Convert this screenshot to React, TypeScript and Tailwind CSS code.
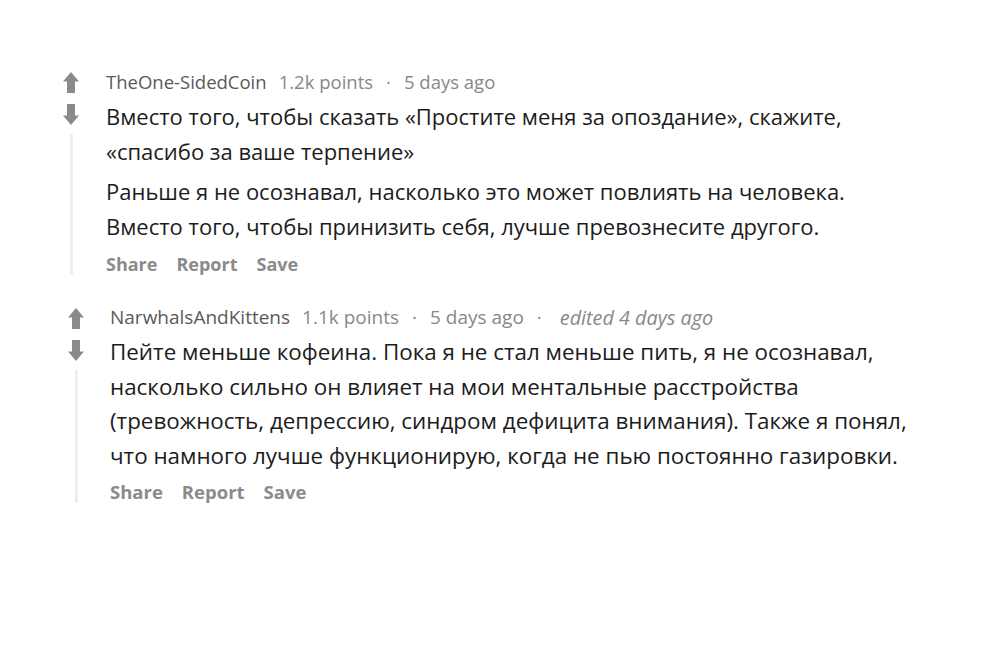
import type { ReactNode } from 'react'

function Arrow({ down = false }: { down?: boolean }) {
  return (
    <svg
      width="16"
      height="21"
      viewBox="0 0 16 21"
      className={down ? 'rotate-180' : ''}
    >
      <path d="M8 0 L16 9.5 H12 V21 H4 V9.5 H0 Z" fill="#8a8a8a" />
    </svg>
  )
}

interface CommentProps {
  author: string
  points: string
  age: string
  edited?: string
  children: ReactNode
  indent: string
  metaClass: string
  bodyClass: string
  actionsClass: string
}

function Comment({ author, points, age, edited, children, indent, metaClass, bodyClass, actionsClass }: CommentProps) {
  return (
    <div className="flex">
      {/* vote column */}
      <div className="flex w-[36px] flex-col items-center">
        <div className="mt-[8px]">
          <Arrow />
        </div>
        <div className="mt-[11px]">
          <Arrow down />
        </div>
        <div className="mt-[9px] w-[3px] flex-1 bg-[#edeef0]" />
      </div>

      <div className={'flex flex-col ' + indent}>
        <div className={metaClass}>
          <span className="text-[#5a5a5a]">{author}</span>
          <span className="ml-[12px]">{points}</span>
          <span className="mx-[13px]">·</span>
          <span>{age}</span>
          {edited && (
            <>
              <span className="mx-[13px]">·</span>
              <span className="ml-[5px] text-[19.8px] italic">{edited}</span>
            </>
          )}
        </div>
        <div className={bodyClass}>{children}</div>
        <div className={actionsClass}>
          <span>Share</span>
          <span>Report</span>
          <span>Save</span>
        </div>
      </div>
    </div>
  )
}

export default function App() {
  return (
    <div className="min-h-screen bg-white pt-[64px] font-['Open_Sans','Noto_Sans',sans-serif]">
      <div className="ml-[53px]">
        <Comment
          author="TheOne-SidedCoin"
          points="1.2k points"
          age="5 days ago"
          indent="ml-[17px]"
          metaClass="flex h-[35px] items-center text-[18.5px] text-[#888]"
          bodyClass="text-[22px] leading-[35px] text-[#1c1c1c]"
          actionsClass="mt-[9px] flex h-[22px] items-center gap-[19px] text-[18px] font-bold text-[#8b8b8b]"
        >
          <p>
            Вместо того, чтобы сказать «Простите меня за опоздание», скажите,
            <br />
            «спасибо за ваше терпение»
          </p>
          <p className="mt-[5px]">
            Раньше я не осознавал, насколько это может повлиять на человека.
            <br />
            Вместо того, чтобы принизить себя, лучше превознесите другого.
          </p>
        </Comment>
      </div>

      <div className="ml-[58px] mt-[25px]">
        <Comment
          author="NarwhalsAndKittens"
          points="1.1k points"
          age="5 days ago"
          edited="edited 4 days ago"
          indent="ml-[16px]"
          metaClass="flex h-[35px] items-center text-[19px] text-[#888]"
          bodyClass="text-[22.4px] leading-[34.5px] text-[#1c1c1c]"
          actionsClass="mt-[8px] flex h-[22px] items-center gap-[19px] text-[18.5px] font-bold text-[#8b8b8b]"
        >
          <p>
            Пейте меньше кофеина. Пока я не стал меньше пить, я не осознавал,
            <br />
            насколько сильно он влияет на мои ментальные расстройства
            <br />
            (тревожность, депрессию, синдром дефицита внимания). Также я понял,
            <br />
            что намного лучше функционирую, когда не пью постоянно газировки.
          </p>
        </Comment>
      </div>
    </div>
  )
}
